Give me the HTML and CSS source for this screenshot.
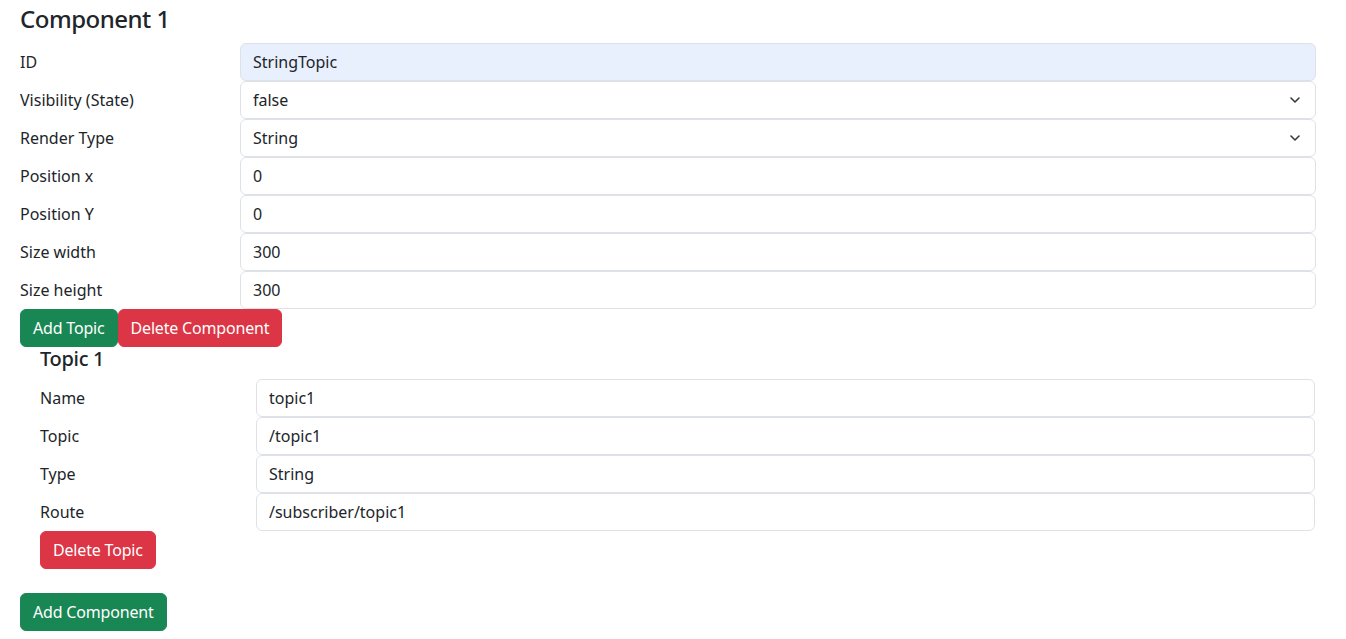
FILE: index.html
```html
<!DOCTYPE html>
<html lang="en">
<head>
    <meta charset="UTF-8">
    <meta name="viewport" content="width=device-width, initial-scale=1.0">
    <title>Components</title>
    <link rel="stylesheet" href="styles.css">
</head>
<body>
    <div class="component">
        <h4 class="component-title">Component 1</h4>

        <div class="field-row">
            <label>ID</label>
            <input class="form-control autofilled" type="text" value="StringTopic">
        </div>
        <div class="field-row">
            <label>Visibility (State)</label>
            <div class="select-wrap">
                <select class="form-select">
                    <option>false</option>
                    <option>true</option>
                </select>
                <svg class="chevron" viewBox="0 0 10 6" width="10" height="6"><path d="M1 1 5 5 9 1" fill="none" stroke="#343a40" stroke-width="1.6" stroke-linecap="round" stroke-linejoin="round"/></svg>
            </div>
        </div>
        <div class="field-row">
            <label>Render Type</label>
            <div class="select-wrap">
                <select class="form-select">
                    <option>String</option>
                </select>
                <svg class="chevron" viewBox="0 0 10 6" width="10" height="6"><path d="M1 1 5 5 9 1" fill="none" stroke="#343a40" stroke-width="1.6" stroke-linecap="round" stroke-linejoin="round"/></svg>
            </div>
        </div>
        <div class="field-row">
            <label>Position x</label>
            <input class="form-control" type="text" value="0">
        </div>
        <div class="field-row">
            <label>Position Y</label>
            <input class="form-control" type="text" value="0">
        </div>
        <div class="field-row">
            <label>Size width</label>
            <input class="form-control" type="text" value="300">
        </div>
        <div class="field-row">
            <label>Size height</label>
            <input class="form-control" type="text" value="300">
        </div>

        <div class="button-row">
            <button class="btn btn-success">Add Topic</button>
            <button class="btn btn-danger">Delete Component</button>
        </div>

        <div class="topic">
            <h5 class="topic-title">Topic 1</h5>
            <div class="field-row topic-row">
                <label>Name</label>
                <input class="form-control" type="text" value="topic1">
            </div>
            <div class="field-row topic-row">
                <label>Topic</label>
                <input class="form-control" type="text" value="/topic1">
            </div>
            <div class="field-row topic-row">
                <label>Type</label>
                <input class="form-control" type="text" value="String">
            </div>
            <div class="field-row topic-row">
                <label>Route</label>
                <input class="form-control" type="text" value="/subscriber/topic1">
            </div>
            <button class="btn btn-danger">Delete Topic</button>
        </div>
    </div>

    <button class="btn btn-success add-component">Add Component</button>
</body>
</html>
```

FILE: styles.css
```css
* {
    box-sizing: border-box;
}

body {
    margin: 0;
    padding: 5px 30px 0 20px;
    font-family: "Noto Sans", "Open Sans", sans-serif;
    font-size: 16px;
    line-height: 1.5;
    color: #212529;
    background-color: #fff;
}

.component-title {
    margin: 0 0 9px 0;
    font-size: 24px;
    font-weight: 500;
    line-height: 1.2;
    letter-spacing: -0.5px;
}

.field-row {
    display: flex;
    align-items: center;
}

.field-row label {
    flex: 0 0 220px;
}

.field-row .form-control,
.field-row .select-wrap {
    flex: 1;
}

.form-control,
.form-select {
    display: block;
    width: 100%;
    height: 38px;
    padding: 6px 12px;
    font-family: inherit;
    font-size: 16px;
    line-height: 1.5;
    color: #212529;
    background-color: #fff;
    border: 1px solid #dee2e6;
    border-radius: 6px;
    outline: none;
}

.autofilled {
    background-color: #e8f0fe;
}

.select-wrap {
    position: relative;
}

.form-select {
    appearance: none;
    -webkit-appearance: none;
    padding-right: 36px;
}

.chevron {
    position: absolute;
    right: 16px;
    top: 16px;
    pointer-events: none;
}

.btn {
    display: inline-block;
    height: 38px;
    padding: 6px 12px;
    font-family: inherit;
    font-size: 16px;
    line-height: 1.5;
    letter-spacing: -0.18px;
    color: #fff;
    border: 1px solid transparent;
    border-radius: 6px;
    cursor: pointer;
}

.btn-success {
    background-color: #198754;
    border-color: #198754;
}

.btn-danger {
    background-color: #dc3545;
    border-color: #dc3545;
}

.button-row {
    display: flex;
}

.topic {
    margin: 0 1px 0 20px;
}

.topic-title {
    margin: 0 0 8px 0;
    font-size: 20px;
    font-weight: 500;
    line-height: 1.2;
    letter-spacing: -0.3px;
}

.topic-row label {
    flex: 0 0 216px;
}

.add-component {
    margin-top: 24px;
}
```
